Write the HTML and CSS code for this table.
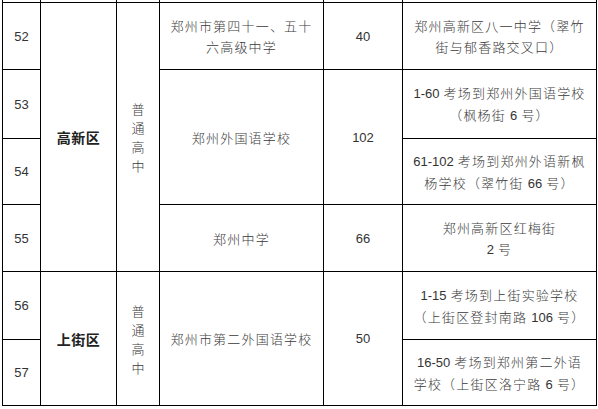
FILE: index.html
```html
<!DOCTYPE html>
<html lang="zh-CN">
<head>
<meta charset="utf-8">
<link rel="stylesheet" href="styles.css">
</head>
<body>
<table class="grid">
  <colgroup>
    <col class="c-no">
    <col class="c-area">
    <col class="c-type">
    <col class="c-school">
    <col class="c-count">
    <col class="c-dest">
  </colgroup>
  <tr class="stub"><td></td><td></td><td></td><td></td><td></td><td></td></tr>
  <tr class="r52">
    <td class="num">52</td>
    <td class="area" rowspan="4">高新区</td>
    <td class="type" rowspan="4">普<br>通<br>高<br>中</td>
    <td class="cn">郑州市第四十一、五十<br>六高级中学</td>
    <td class="num">40</td>
    <td class="cn">郑州高新区八一中学（翠竹<br>街与郁香路交叉口）</td>
  </tr>
  <tr class="r53">
    <td class="num">53</td>
    <td class="cn" rowspan="2">郑州外国语学校</td>
    <td class="num" rowspan="2">102</td>
    <td class="cn"><span class="d">1-60</span> 考场到郑州外国语学校<br>（枫杨街 <span class="d">6</span> 号）</td>
  </tr>
  <tr class="r54">
    <td class="num">54</td>
    <td class="cn"><span class="d">61-102</span> 考场到郑州外语新枫<br>杨学校（翠竹街 <span class="d">66</span> 号）</td>
  </tr>
  <tr class="r55">
    <td class="num">55</td>
    <td class="cn">郑州中学</td>
    <td class="num">66</td>
    <td class="cn">郑州高新区红梅街<br><span class="d">2</span> 号</td>
  </tr>
  <tr class="r56">
    <td class="num">56</td>
    <td class="area" rowspan="2">上街区</td>
    <td class="type" rowspan="2">普<br>通<br>高<br>中</td>
    <td class="cn" rowspan="2">郑州市第二外国语学校</td>
    <td class="num" rowspan="2">50</td>
    <td class="cn"><span class="d">1-15</span> 考场到上街实验学校<br>（上街区登封南路 <span class="d">106</span> 号）</td>
  </tr>
  <tr class="r57">
    <td class="num">57</td>
    <td class="cn"><span class="d">16-50</span> 考场到郑州第二外语<br>学校（上街区洛宁路 <span class="d">6</span> 号）</td>
  </tr>
</table>
</body>
</html>
```
FILE: styles.css
```css
html, body {
  margin: 0;
  padding: 0;
  background: #ffffff;
}
body {
  width: 598px;
  height: 409px;
  overflow: hidden;
  font-family: "Noto Sans CJK SC", "Liberation Sans", sans-serif;
  color: #333333;
}
.grid {
  margin-left: 2px;
  border-collapse: collapse;
  table-layout: fixed;
  width: 594px;
}
.c-no { width: 38px; }
.c-area { width: 76px; }
.c-type { width: 43px; }
.c-school { width: 164px; }
.c-count { width: 79px; }
.c-dest { width: 194px; }
.grid td {
  border: 1px solid #000;
  padding: 0;
  text-align: center;
  vertical-align: middle;
}
.stub td {
  border-top: none;
  height: 2px;
}
.r52 td { height: 66px; }
.r53 td { height: 68px; }
.r54 td { height: 65px; }
.r55 td { height: 66px; }
.r56 td { height: 67px; }
.r57 td { height: 65px; }
.num, .d {
  font-family: "Liberation Sans", Arial, sans-serif;
  font-size: 13px;
  color: #333;
}
.d { letter-spacing: 0; }
.cn {
  font-size: 13px;
  font-weight: 300;
  line-height: 21px;
  letter-spacing: 1.2px;
  color: #3a3a3a;
}
.area {
  font-size: 14px;
  font-weight: 700;
  color: #222;
  letter-spacing: 0.5px;
}
.type {
  font-size: 13px;
  font-weight: 300;
  line-height: 19px;
  color: #3a3a3a;
}
```
